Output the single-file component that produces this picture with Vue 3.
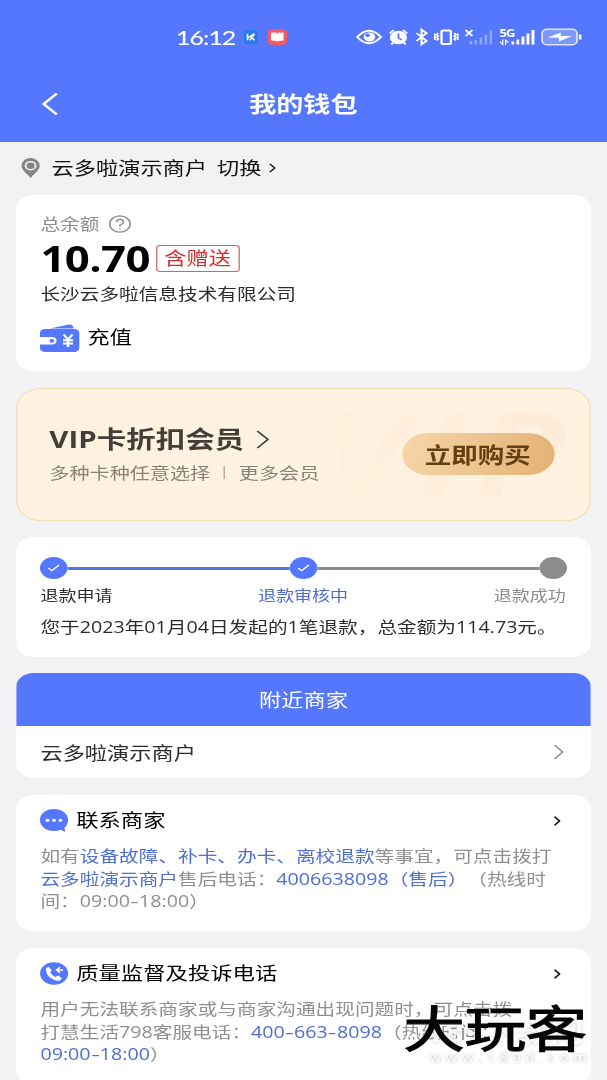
<script setup>
const steps = [
  { label: '退款申请', state: 'done' },
  { label: '退款审核中', state: 'current' },
  { label: '退款成功', state: 'todo' },
]
</script>

<template>
  <div class="viewport">
    <div class="screen">
      <header class="header">
        <div class="status">
          <span class="time">16:12</span>
          <svg class="app-a" width="12" height="14" viewBox="0 0 12 15">
            <rect width="12" height="15" rx="3" fill="#2a7be8" />
            <path d="M3 4v7M3.2 8.5 8.8 4M5.800 7.500 9 11M5 11l4-7" stroke="#fff" stroke-width="1.400" fill="none" />
          </svg>
          <svg class="app-b" width="16" height="16" viewBox="0 0 16 16">
            <rect width="16" height="16" rx="4" fill="#ee5a68" />
            <path d="M3 4l1.200-.8.9.8 1.300-.8L8 4.400l1.600-1.200 1.300.8.900-.8L13 4v7.500q-2.500.2-5 1-2.500-.8-5-1z" fill="#fff" />
          </svg>
          <span class="grow"></span>
          <svg class="sys" width="184" height="24" viewBox="0 0 184 24">
            <g fill="none" stroke="#fff">
              <path d="M1 12q9.500-12.500 19 0q-9.500 12.500-19 0z" stroke-width="1.900" />
              <circle cx="10.800" cy="12" r="4.600" fill="#fff" stroke="none" />
              <circle cx="9.300" cy="10.300" r="1.800" fill="#5577fd" stroke="none" />
              <circle cx="34" cy="12.500" r="6.300" fill="#fff" stroke-width="1" />
              <path d="M34 8.500v4.500l2.600 2" stroke="#5577fd" stroke-width="1.500" />
              <path d="M27 8.500 30.300 5M41 8.500 37.700 5M29.800 17.500l-1.500 2M38.200 17.500l1.500 2" stroke-width="1.700" />
              <path d="M48.500 8l8 8-4 3.500v-15l4 3.500-8 8" stroke-width="1.700" />
              <rect x="68.500" y="5.500" width="7.500" height="13.500" rx="1.300" stroke-width="1.800" />
              <path d="M66 8l-1.500 1.500L66 11l-1.500 1.500L66 14l-1.500 1.500M63.200 8.500v6.500M78.600 8l1.500 1.500-1.500 1.500 1.500 1.500-1.500 1.500 1.500 1.500M81.500 8.500v6.500" stroke-width="1.400" />
              <path d="M87.800 5l5.400 6M93.200 5l-5.400 6" stroke-width="1.700" />
            </g>
            <g fill="#fff">
              <g opacity=".35">
                <rect x="91" y="16" width="2" height="3.500" /><rect x="95" y="15" width="2" height="4.500" />
                <rect x="99" y="12.500" width="2" height="7" /><rect x="103" y="9.500" width="2" height="10" />
                <rect x="107" y="5" width="2" height="14.500" />
              </g>
              <rect x="124.500" y="16.500" width="2.200" height="3" /><rect x="128.500" y="14.500" width="2.200" height="5" />
              <rect x="132.500" y="11.500" width="2.400" height="8" /><rect x="136.500" y="8.500" width="2.400" height="11" />
              <rect x="140.500" y="5" width="2.400" height="14.500" />
              <text x="115" y="12.500" class="net">5G</text>
              <path d="M117.500 14.500v5l-2.200-2.600M119.800 20v-5l2.200 2.600" stroke="#fff" stroke-width="1" fill="none" />
            </g>
            <rect x="149" y="4.200" width="28" height="15.600" rx="4" fill="#7f98fe" stroke="#dfe5ff" stroke-width="1.400" />
            <path d="M179.500 9.500v5" stroke="#fff" stroke-width="2" />
            <path d="M153.500 12.500 164 7.500v3.500h9L162.500 16.500v-3.700z" fill="#fff" />
          </svg>
        </div>
        <div class="titlebar">
          <svg class="back" width="14" height="24" viewBox="0 0 14 24">
            <path d="M12.500 1.500 2 12l10.500 10.500" fill="none" stroke="#fff" stroke-width="2.300" />
          </svg>
          <h1>我的钱包</h1>
        </div>
      </header>

      <div class="location">
        <svg class="pin" width="15" height="20" viewBox="0 0 15 20">
          <path d="M7.500 0A7.300 7.800 0 0 0 .2 7.700C.2 12 4 14.500 7.500 20 11 14.500 14.800 12 14.800 7.700A7.300 7.800 0 0 0 7.500 0z" fill="#858588" />
          <circle cx="7.500" cy="7.700" r="4" fill="#858588" stroke="#f2f2f5" stroke-width="1.500" />
        </svg>
        <span class="place">云多啦演示商户</span><span class="place switch">切换</span>
        <svg width="6" height="10" viewBox="0 0 6 10"><path d="M1 .8 5 5 1 9.200" fill="none" stroke="#111" stroke-width="1.200" /></svg>
      </div>

      <main>
        <section class="card balance">
          <div class="label">总余额
            <svg width="18" height="20" viewBox="0 0 18 20">
              <circle cx="9" cy="10" r="8.200" fill="none" stroke="#8c8c8c" stroke-width="1.200" />
              <path d="M6.300 8q.2-2.700 2.800-2.700T11.800 8Q11.800 9.500 9 11v1.700M9 14.200v1.400" fill="none" stroke="#8c8c8c" stroke-width="1.200" />
            </svg>
          </div>
          <div class="amount"><strong>10.70</strong><span class="tag">含赠送</span></div>
          <div class="company">长沙云多啦信息技术有限公司</div>
          <div class="recharge">
            <svg width="32" height="28" viewBox="0 0 32 28">
              <path d="M8 4.500 23 .5q3-.6 3.500 2l.4 2z" fill="#5577fd" />
              <rect x="0" y="5" width="31.500" height="23" rx="4" fill="#5577fd" />
              <path d="M0 13h9.500a3.800 3.800 0 0 1 0 7.600H0z" fill="#fff" />
              <circle cx="9.500" cy="16.800" r="1.900" fill="#5577fd" />
              <path d="M19 10.500l3.500 5 3.500-5M22.500 15.500v7.500M18.500 16.300h8M18.500 19.500h8" fill="none" stroke="#fff" stroke-width="2" />
            </svg>
            <span>充值</span>
          </div>
        </section>

        <section class="vip">
          <div class="ghost">VIP</div>
          <div class="vip-text">
            <h2>VIP卡折扣会员
              <svg width="11" height="19" viewBox="0 0 11 19"><path d="M1 1l8.500 8.500L1 18" fill="none" stroke="#443d38" stroke-width="1.500" /></svg>
            </h2>
            <p>多种卡种任意选择<i></i>更多会员</p>
          </div>
          <button>立即购买</button>
        </section>

        <section class="card refund">
          <div class="track">
            <template v-for="(s, i) in steps" :key="s.label">
              <div v-if="i" class="line" :class="s.state"></div>
              <div class="dot" :class="s.state">
                <svg v-if="s.state !== 'todo'" width="10" height="8" viewBox="0 0 10 8"><path d="M.7 4 3.500 6.700 9.300 1" fill="none" stroke="#fff" stroke-width="1.100" /></svg>
              </div>
            </template>
          </div>
          <div class="labels">
            <span v-for="s in steps" :key="s.label" :class="s.state">{{ s.label }}</span>
          </div>
          <p>您于2023年01月04日发起的1笔退款，总金额为114.73元。</p>
        </section>

        <section class="card nearby">
          <div class="nearby-head">附近商家</div>
          <div class="nearby-row">
            <span>云多啦演示商户</span>
            <svg width="9" height="16" viewBox="0 0 9 16"><path d="M1 1l6.500 7L1 15" fill="none" stroke="#8f8f8f" stroke-width="1.300" /></svg>
          </div>
        </section>

        <section class="card contact">
          <div class="contact-head">
            <svg width="23" height="24" viewBox="0 0 23 24">
              <path d="M11.200 0C4.800 0 0 4.700 0 11s4.800 11 11.200 11c2 0 3.800-.4 5.500-1.200l3 2q.5.200.4-.5l-.5-3.500c2-2.100 2.900-4.700 2.900-7.800C22.500 4.700 17.600 0 11.200 0z" fill="#5577fd" />
              <g fill="#fff"><circle cx="6" cy="11.200" r="1.500" /><circle cx="11.200" cy="11.200" r="1.500" /><circle cx="16.400" cy="11.200" r="1.500" /></g>
            </svg>
            <h3>联系商家</h3>
            <svg class="go" width="6" height="10" viewBox="0 0 6 10"><path d="M1 .8 5 5 1 9.200" fill="none" stroke="#111" stroke-width="1.400" /></svg>
          </div>
          <p>如有<b>设备故障、补卡、办卡、离校退款</b>等事宜，可点击拨打<br /><b>云多啦演示商户</b>售后电话：<b>4006638098（售后）</b>（热线时<br />间：09:00<s>-</s>18:00）</p>
        </section>

        <section class="card contact">
          <div class="contact-head">
            <svg width="23" height="24" viewBox="0 0 23 24">
              <circle cx="11.300" cy="11.500" r="11.200" fill="#5577fd" />
              <path d="M5 6 7 4.800 9.500 8.300 8.200 10.300q1.200 3 4.200 4.600l2.200-1.300 3 2.600-1.500 2.200q-3.700 1.400-7.800-2.600T5 6z" fill="#fff" />
              <path d="M18.500 8h-5M16 5.300l-2.700 2.700 2.700 2.700" fill="none" stroke="#fff" stroke-width="1.400" />
            </svg>
            <h3>质量监督及投诉电话</h3>
            <svg class="go" width="6" height="10" viewBox="0 0 6 10"><path d="M1 .8 5 5 1 9.200" fill="none" stroke="#111" stroke-width="1.400" /></svg>
          </div>
          <p>用户无法联系商家或与商家沟通出现问题时，可点击拨<br />打慧生活798客服电话：<b>400<s>-</s>663<s>-</s>8098</b>（热线时间：<br /><b>09:00<s>-</s>18:00</b>）</p>
        </section>
      </main>

      <div class="mark mark-site">189下载网</div>
      <div class="mark mark-url">www.189d.com</div>
      <div class="mark mark-name">大玩客</div>
    </div>
  </div>
</template>

<style>
html, body { margin: 0; overflow: hidden; background: #f2f2f5; }
</style>

<style scoped>
.viewport { width: 607px; height: 1080px; overflow: hidden; position: relative; }
/* The interface is laid out on a 486px canvas and widened to fill the window. */
.screen {
  position: relative; width: 486px; height: 1080px; overflow: hidden;
  transform: scaleX(1.249); transform-origin: 0 0; background: #f2f2f5;
  font-family: "Open Sans", "Noto Sans CJK SC", sans-serif; font-size: 15.74px;
  color: #2c2c2c; text-spacing-trim: space-all; white-space: nowrap;
}
h1, h2, h3, p { margin: 0; font-weight: 400; }
svg { display: block; flex: none; }
b { font-weight: 400; color: #4f6ed2; }
s { text-decoration: none; display: inline-block; width: 7.4px; text-align: center; transform: scaleX(1.4); }
.header { height: 142px; background: #5577fd; color: #fff; }
.status { display: flex; align-items: center; height: 74px; padding: 0 17px 0 141px; }
.time { font-size: 20px; line-height: 24px; width: 48px; font-family: Lato, sans-serif; font-weight: 500; letter-spacing: -.8px; }
.app-a { margin-left: 6px; }
.app-b { margin-left: 7px; }
.grow { flex: 1; }
.net { font: 700 10.5px "Open Sans", sans-serif; letter-spacing: -.8px; }
.titlebar { display: flex; align-items: center; position: relative; height: 60px; padding: 0 33px; }
.back { margin-right: 152.5px; }
h1 { font-size: 21.7px; line-height: 30px; font-weight: 700; }
.location { display: flex; align-items: center; height: 53px; padding-left: 17px; font-size: 17.8px; color: #111; }
.location > svg { margin-bottom: 1px; }
.pin { margin-right: 9.3px; }
.place { line-height: 26px; margin-bottom: 2px; }
.switch { margin: 0 6px 2px 8px; }
main { display: flex; flex-direction: column; gap: 17px; padding: 0 13px; }
.card { background: #fff; border-radius: 14px; box-sizing: border-box; padding: 0 20px 0 19.4px; }
.balance { height: 176px; padding-top: 17px; }
.label { display: flex; align-items: center; gap: 7px; height: 22px; color: #8c8c8c; margin-bottom: 1px; }
.label svg { margin-top: 1px; }
.amount { display: flex; align-items: center; height: 47px; gap: 6.4px; }
.amount strong { font-family: "Open Sans", sans-serif; font-size: 35px; line-height: 47px; font-weight: 700; width: 86px; letter-spacing: -.5px; color: #000; }
.tag { border: 1px solid #d16566; border-radius: 3px; color: #d22d2d; font-size: 17.8px; line-height: 25px; width: 65px; text-align: center; }
.company { height: 24px; line-height: 24px; }
.recharge { display: flex; align-items: center; gap: 6.500px; margin-top: 18px; height: 28px; font-size: 17.7px; color: #000; margin-left: -.8px; }
.recharge span { line-height: 26px; margin-bottom: 2px; }
.vip { position: relative; display: flex; align-items: center; justify-content: space-between; height: 133px; margin-bottom: -1px; box-sizing: border-box; border: 1.500px solid #f3ddb2; border-radius: 20px; background: #fff2e1; padding: 0 28.5px 0 25.5px; overflow: hidden; }
.vip-text { position: relative; height: 68px; margin-top: 2px; }
h2 { display: flex; align-items: center; gap: 9.500px; font-size: 23.6px; line-height: 34px; font-weight: 700; color: #443d38; }
h2 svg { margin-top: 1px; }
.vip-text p { font-size: 16.1px; line-height: 34px; color: #8a8178; display: flex; align-items: center; }
.vip-text i { width: 1px; height: 13px; background: #a79d92; margin: 0 11px; }
button { position: relative; margin-bottom: 2px; width: 122px; height: 42px; border: 0; border-radius: 21px; padding: 0; background: linear-gradient(100deg, #f6d6a8, #e3b274); color: #633e11; font: 700 21.2px/40px "Noto Sans CJK SC", sans-serif; }
.ghost { position: absolute; left: 244px; top: 2px; font-size: 117px; line-height: 119px; font-weight: 700; font-style: italic; letter-spacing: 8px; background: linear-gradient(90deg, #fff0dd, #feebd8); background-clip: text; color: transparent; }
.refund { height: 120px; margin-bottom: -1px; padding-top: 20px; }
.track { display: flex; align-items: center; height: 22px; margin: 0 -1px 0 -.5px; }
.dot { width: 22px; height: 22px; border-radius: 50%; background: #5577fd; display: flex; align-items: center; justify-content: center; flex: none; }
.dot.todo { background: #8c8c8c; }
.line { flex: 1; height: 3px; background: #5577dd; }
.line.todo { background: #8c8c8c; }
.labels { display: flex; justify-content: space-between; font-size: 14.4px; line-height: 24px; margin-top: 5px; }
.labels .current { color: #4f6ed2; }
.labels .todo { color: #8c8c8c; }
.refund p { line-height: 30px; margin-top: 4px; }
.nearby { height: 105px; padding: 0; overflow: hidden; font-size: 17.8px; }
.nearby-head { height: 53px; line-height: 55px; text-align: center; background: #5577fd; color: #fff; }
.nearby-row { display: flex; align-items: center; justify-content: space-between; height: 52px; padding: 0 21px 0 19.4px; }
.contact { height: 136px; flex: none; padding-top: 12px; }
.contact-head { display: flex; align-items: center; height: 28px; margin-left: -.6px; }
h3 { flex: 1; font-size: 17.9px; line-height: 26px; margin: 0 0 2px 6.2px; color: #000; }
.go { margin-right: 4.2px; }
.contact p { margin-top: 10px; line-height: 22.6px; color: #8f8f8f; }
.mark { position: absolute; }
.mark-name { left: 323px; top: 998px; font-size: 49px; line-height: 60px; font-weight: 400; color: #050505; -webkit-text-stroke: 1.2px #050505; text-shadow: 0 0 2px #fff; }
.mark-site { left: 340px; top: 1014px; font-size: 27px; line-height: 36px; font-weight: 700; color: rgba(255, 255, 255, .85); text-shadow: 0 1px 4px rgba(0, 0, 0, .16); }
.mark-url { left: 344px; top: 1050px; font-size: 12px; line-height: 16px; letter-spacing: 3.6px; color: #fff; text-shadow: 0 0 3px rgba(0, 0, 0, .35); }
</style>
